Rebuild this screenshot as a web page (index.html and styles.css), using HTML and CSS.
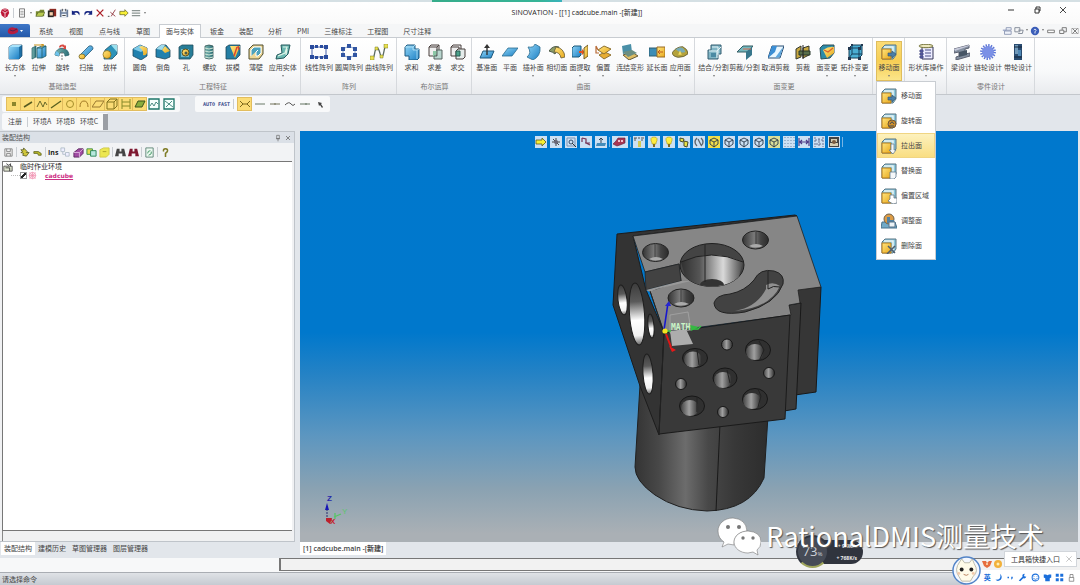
FILE: index.html
```html
<!DOCTYPE html>
<html lang="zh-CN">
<head>
<meta charset="utf-8">
<title>SINOVATION</title>
<link rel="stylesheet" href="styles.css">
</head>
<body>
<svg class="sprite" aria-hidden="true">
  <defs>
    <linearGradient id="blue" x1="0" y1="0" x2="1" y2="1"><stop offset="0" stop-color="#8fd4f5"/><stop offset="1" stop-color="#1c7fc4"/></linearGradient>
    <linearGradient id="teal" x1="0" y1="0" x2="1" y2="0"><stop offset="0" stop-color="#7fb9b4"/><stop offset="1" stop-color="#2c6f78"/></linearGradient>
    <linearGradient id="gold" x1="0" y1="0" x2="1" y2="1"><stop offset="0" stop-color="#ffe680"/><stop offset="1" stop-color="#e8a81c"/></linearGradient>
  </defs>
  <symbol id="box" viewBox="0 0 16 16"><path d="M2 3l3-2h10v11l-3 3H2z" fill="#1d6fa5" stroke="#17486b" stroke-width=".7"/><path d="M2 3h10v12H2z" fill="url(#blue)"/><path d="M2 3l3-2h10l-3 2z" fill="#a7e2fa"/></symbol>
  <symbol id="extrude" viewBox="0 0 16 16"><path d="M1 4l4-2v11l-4 2z" fill="url(#teal)" stroke="#215a5f" stroke-width=".7"/><path d="M6 4l5-2h4v10l-4 2H6z" fill="url(#blue)" stroke="#215a5f" stroke-width=".8"/><path d="M6 4h5v10M11 4l4-2" fill="none" stroke="#215a5f" stroke-width=".8"/><path d="M3 1h9M10 0l3 1-3 2" stroke="#c9931d" fill="none"/></symbol>
  <symbol id="revolve" viewBox="0 0 16 16"><path d="M1 11C2 2 14 2 15 11l-4 1c0-5-6-5-6 0z" fill="url(#teal)" stroke="#245d68" stroke-width=".8"/><path d="M1 11l4 1 0-3-3-2z" fill="#6fc4ee"/><path d="M5 3c1-3 5-3 6-1l1-1v4H8l2-1C9 2 7 2 6 4z" fill="#d94b43"/><path d="M8 8v8" stroke="#777" stroke-dasharray="2 1"/></symbol>
  <symbol id="sweep" viewBox="0 0 16 16"><path d="M2 11L11 2q4-1 4 3L6 14q-5 2-4-3z" fill="url(#blue)" stroke="#2b5d77" stroke-width=".8"/><ellipse cx="4" cy="12.500" rx="3" ry="2.500" fill="url(#gold)" stroke="#6b5a1c" stroke-width=".7"/></symbol>
  <symbol id="loft" viewBox="0 0 16 16"><path d="M3 6l6-5h6v9l-5 5H2z" fill="#2d93b9" stroke="#1f5268" stroke-width=".8"/><path d="M9 1h6v7z" fill="#9be0ee"/><circle cx="5" cy="10.500" r="4" fill="url(#gold)" stroke="#7b641d" stroke-width=".7"/></symbol>
  <symbol id="fillet" viewBox="0 0 16 16"><path d="M1 5l7-4 7 3v8l-6 4-8-4z" fill="#2181ae" stroke="#1f4a5e" stroke-width=".8"/><path d="M1 5l7-4 7 3-6 4z" fill="#7fcbe8"/><path d="M7 3l3-1 5 2v5q-1 3-4 2 1-5-4-8z" fill="url(#gold)"/></symbol>
  <symbol id="chamfer" viewBox="0 0 16 16"><path d="M1 5l5-4h5l4 5v7l-5 2-9-2z" fill="#2181ae" stroke="#1f4a5e" stroke-width=".8"/><path d="M1 5l5-4h4L7 6z" fill="#a1dbec"/><path d="M7 6l3-4 5 5-5 2z" fill="url(#gold)"/></symbol>
  <symbol id="hole" viewBox="0 0 16 16"><path d="M1 3l3-2h11v10l-3 4H1z" fill="#277d98" stroke="#224e5d" stroke-width=".8"/><path d="M3 5h8v8H3z" fill="#72bac9"/><circle cx="7.500" cy="8.500" r="3.500" fill="url(#gold)" stroke="#5a4e1a"/><circle cx="8" cy="9" r="1.500" fill="#495c4b"/></symbol>
  <symbol id="thread" viewBox="0 0 16 16"><path d="M4 2q4-2 8 0v12q-4 2-8 0z" fill="url(#teal)" stroke="#355" stroke-width=".8"/><path d="M4 4q4 2 8 0M4 7q4 2 8 0M4 10q4 2 8 0M4 13q4 2 8 0" stroke="#cfe7d8" fill="none"/></symbol>
  <symbol id="draft" viewBox="0 0 16 16"><path d="M1 3l3-2h11v10l-4 4H1z" fill="#247ea4" stroke="#1d4658" stroke-width=".8"/><path d="M5 2h10L10 14z" fill="url(#gold)"/><path d="M12 3l-3 9M13 2l1 4" stroke="#db4330" stroke-width="1.400"/></symbol>
  <symbol id="shell" viewBox="0 0 16 16"><path d="M1 5l4-4h10v9l-4 5H1z" fill="#ecd795" stroke="#504e31"/><path d="M3 12V6l3-3h7v6l-3 3H8V8l2-2" fill="#4ba2bc" stroke="#fff"/></symbol>
  <symbol id="apply" viewBox="0 0 16 16"><path d="M6 1l9 0-2 9-4 4-8 1 1-4 5-2z" fill="#6db9b2" stroke="#24595c"/><path d="M8 3h4l-2 6-7 3M12 5l-1 6" fill="none" stroke="#dff4e8" stroke-width="1.200"/></symbol>
  <symbol id="linear" viewBox="0 0 18 16"><path d="M2 3h14v10H2z" fill="none" stroke="#4660a8"/><path d="M0 1h4v4H0zM5 1h3v3H5zM10 1h3v3h-3zM14 1h4v4h-4zM0 11h4v4H0zM5 12h3v3H5zM10 12h3v3h-3zM14 11h4v4h-4z" fill="#294b9d"/></symbol>
  <symbol id="circular" viewBox="0 0 18 16"><path d="M9 2l6 3v6l-6 3-6-3V5z" fill="none" stroke="#7c9acb"/><path d="M7 0h4v4H7zM7 12h4v4H7zM1 3h4v4H1zM13 3h4v4h-4zM1 9h4v4H1zM13 9h4v4h-4z" fill="#3155a2"/></symbol>
  <symbol id="curvearr" viewBox="0 0 18 16"><path d="M2 14C5 16 4 4 7 4s3 10 5 9 2-11 4-11" fill="none" stroke="#5a6a61" stroke-width="1.300"/><path d="M0 12h4v4H0zM5 3h3v3H5zM10 11h3v3h-3zM14 0h4v4h-4z" fill="#e9e04f" stroke="#777925" stroke-width=".5"/></symbol>
  <symbol id="union" viewBox="0 0 16 16"><path d="M1 3l2-2h8v4h4v9l-2 2H5v-4H1z" fill="url(#blue)" stroke="#1e5b81"/><path d="M1 3h8v3h4v9M9 3l2-2M13 6l2-1" fill="none" stroke="#bce7f7" stroke-width=".8"/></symbol>
  <symbol id="subtract" viewBox="0 0 16 16"><path d="M2 3l2-2h8v9l-2 2H2zM2 3h8v9M10 3l2-2" fill="#eee" stroke="#493f3c"/><path d="M6 7h5v3H9v3H6z" fill="#8bc7a6"/><path d="M9 6h6v9H7v-3h3V6" fill="#b9d6cf" stroke="#54625f"/></symbol>
  <symbol id="intersect" viewBox="0 0 16 16"><path d="M1 3l2-2h8v9l-2 2H1zM1 3h8v9" fill="#eee" stroke="#493f3c"/><path d="M6 7l2-2h7v8l-2 2H6z" fill="#e5eceb" stroke="#493f3c"/><path d="M6 7h4v5H6z" fill="#4ca28b" stroke="#285f54"/></symbol>
  <symbol id="datum" viewBox="0 0 16 16"><path d="M4 7h11l-3 7H1z" fill="url(#blue)" stroke="#1f587c"/><path d="M8 11V3" stroke="#333" stroke-width="1.400"/><path d="M5 4l3-4 3 4z" fill="#333"/></symbol>
  <symbol id="plane" viewBox="0 0 16 16"><path d="M6 4h10l-6 8H0z" fill="url(#blue)" stroke="#2b6c91" stroke-width=".8"/></symbol>
  <symbol id="interp" viewBox="0 0 16 16"><path d="M3 3q6 1 7-3l5 3q1 9-7 13l-6-3q5-4 1-10z" fill="url(#blue)" stroke="#2b6c91" stroke-width=".8"/></symbol>
  <symbol id="tangent" viewBox="0 0 16 16"><path d="M0 7q4-6 10-4l-4 7q-2-2-6-3z" fill="#8c9c68" stroke="#4c5a49"/><path d="M7 3q8 1 9 10l-4 1q-1-6-7-6z" fill="url(#gold)" stroke="#665932" stroke-width=".8"/></symbol>
  <symbol id="extract" viewBox="0 0 16 16"><path d="M0 4l2-2h7v9l-2 2H0z" fill="url(#blue)" stroke="#1b5879"/><path d="M7 7h3V5l3 3-3 3V9H7z" fill="#e5531f"/><path d="M12 4l4-3v11l-4 3z" fill="url(#gold)" stroke="#755f28"/></symbol>
  <symbol id="offset" viewBox="0 0 16 16"><path d="M4 11l6-3 6 3-7 4z" fill="#e8ad32" stroke="#8d7132"/><path d="M3 6l6-4 7 3-7 5z" fill="url(#gold)" stroke="#8d7132"/><path d="M1 2l2 4M1 2v7h3" fill="none" stroke="#b76b37" stroke-width="1.200"/></symbol>
  <symbol id="morph" viewBox="0 0 16 16"><path d="M0 2l9-2 1 8-9 2z" fill="#498fa7"/><path d="M1 11l9-3 6 4-9 4z" fill="#dfbd63" stroke="#665a38"/><path d="M1 8l9-2 5 3-9 4z" fill="#6c8f82"/></symbol>
  <symbol id="extend" viewBox="0 0 16 16"><path d="M0 4h9v8H0z" fill="#3d8db5" stroke="#2e5f72"/><path d="M8 3h8v10H8z" fill="url(#gold)" stroke="#986a25"/><path d="M10 8h4M11 6l-2 2 2 2" fill="none" stroke="#c15a1b"/></symbol>
  <symbol id="appface" viewBox="0 0 18 16"><path d="M0 9q5-7 12-7 6 3 6 8-4 4-11 4-6-1-7-5z" fill="#b4a23b" stroke="#625d31"/><path d="M4 5q8-5 11 3-6 2-11-3z" fill="#77abb7"/><path d="M7 11l2-5 2 5z" fill="#f5dd61"/></symbol>
  <symbol id="joinsplit" viewBox="0 0 16 16"><path d="M5 1h10v9h-3v5H2V6h3z" fill="#80b5c5" stroke="#335c70"/><path d="M3 7h8v7M11 7l4-4M6 3h6v8" stroke="#e6f4f7" fill="none"/><path d="M5 9h5v4H5z" fill="#4b8aa3"/></symbol>
  <symbol id="cutsplit" viewBox="0 0 16 16"><path d="M0 8l6-6h10l-5 6z" fill="#73b6bc" stroke="#335c64"/><path d="M9 8l6-5v8l-6 5z" fill="#37768b"/><path d="M6 5h8" stroke="#dc6e52"/></symbol>
  <symbol id="uncut" viewBox="0 0 16 16"><path d="M4 2h12l-4 12H0z" fill="#e9f7ff" stroke="#294f74"/><path d="M4 2h5l-2 6-7 6z" fill="#3b8ed4"/><path d="M15 3l-3 10-5 1z" fill="#5ca6de"/></symbol>
  <symbol id="cut" viewBox="0 0 16 16"><path d="M1 5l5-3v11l-5 2zM8 4l6-2v9l-6 3z" fill="#c7a740" stroke="#32372c"/><path d="M4 7h11v4H4z" fill="#586e4b" stroke="#29382b"/><path d="M8 1v14" stroke="#222"/></symbol>
  <symbol id="facechg" viewBox="0 0 16 16"><path d="M1 4l3-3h11v8l-4 5-9 1z" fill="#2c8ba8" stroke="#2e5058"/><path d="M4 6q6-4 11-3v6l-7 5z" fill="url(#gold)"/><path d="M5 6l4 2 5-4" fill="none" stroke="#d9622c" stroke-width="1.200"/></symbol>
  <symbol id="topo" viewBox="0 0 16 16"><path d="M2 4l3-3h10v10l-3 3H2z" fill="#4baed3" stroke="#153e57"/><path d="M2 4h10v10M12 4l3-3M5 1v9h10M5 10l-3 4" fill="none" stroke="#173f5a"/><path d="M1 3h3v3H1zM11 3h3v3h-3zM1 13h3v3H1zM11 13h3v3h-3zM4 0h2v2H4zM14 0h2v2h-2z" fill="#233850"/></symbol>
  <symbol id="library" viewBox="0 0 16 16"><path d="M4 3h11v12H4z" fill="#ececff" stroke="#343457"/><ellipse cx="8" cy="2" rx="7" ry="1.700" fill="#eee9bf" stroke="#77763f"/><path d="M2 6h3v2H2zM2 9h3v2H2zM2 12h3v2H2zM7 6h6M7 9h6M7 12h6" fill="#575bb0" stroke="#4a4e87"/></symbol>
  <symbol id="beam" viewBox="0 0 16 16"><path d="M0 5l15-4v3l-4 1v5l5-1v3L2 16v-3l3-1V8L0 9z" fill="#8490a0" stroke="#5d6171"/><path d="M5 8l8-2v5l-8 2z" fill="#475565"/><path d="M0 5l15-4v1L1 7z" fill="#c6c9da"/></symbol>
  <symbol id="gear" viewBox="0 0 16 16"><circle cx="8" cy="8" r="6" fill="#7b90e6"/><circle cx="8" cy="8" r="6.700" fill="none" stroke="#5d76d6" stroke-width="2.400" stroke-dasharray="1.400 1.230"/></symbol>
  <symbol id="pulley" viewBox="0 0 16 16"><path d="M4 0h8v16H4z" fill="#294b70"/><path d="M5 1h3v9H5z" fill="#7199b9"/><path d="M8 6h3v6H8z" fill="#5088b5"/><path d="M4 3h8M4 13h8" stroke="#14263d"/></symbol>
  <symbol id="moveface" viewBox="0 0 16 16"><path d="M1 4l3-3h11v10l-3 4H1z" fill="#8cc9de" stroke="#587483"/><path d="M1 5h9v10H1z" fill="url(#gold)" stroke="#b67a1b"/><path d="M3 3h9v9" fill="none" stroke="#eaf5f5" stroke-width="1.500"/></symbol>
  <symbol id="shift" viewBox="0 0 16 16"><use href="#moveface"/><path d="M7 9h4V7l4 3-4 4v-2H7z" fill="#4a7ea6" stroke="#2f536e" stroke-width=".6"/></symbol>
  <symbol id="rot" viewBox="0 0 16 16"><use href="#moveface"/><circle cx="11" cy="11" r="4" fill="#cf902c" stroke="#6e5638"/><path d="M9 11q2-4 4 0M8 13h5" fill="none" stroke="#3f4d5b"/></symbol>
  <symbol id="pull" viewBox="0 0 16 16"><use href="#moveface"/><path d="M10 6h3v6h2l-3 4-4-4h2z" fill="#f4f5f4" stroke="#5d7587" stroke-width=".7"/></symbol>
  <symbol id="replace" viewBox="0 0 16 16"><use href="#moveface"/><path d="M9 9h6v5l-2 2H9z" fill="#f5f8fa" stroke="#5e7991" stroke-width=".8"/></symbol>
  <symbol id="region" viewBox="0 0 16 16"><use href="#moveface"/><path d="M9 7l4 0 0 3 3 0 0 5-4 1-5-3 2-2z" fill="#fff" stroke="#667785" stroke-width=".8"/></symbol>
  <symbol id="adjust" viewBox="0 0 16 16"><path d="M1 9h13l2 6H0z" fill="#71aac7" stroke="#49728c"/><circle cx="8" cy="6" r="5" fill="#dd9c46" stroke="#6c614e"/><path d="M6 4h3v3h4v3H6z" fill="#5082a4"/><path d="M8 9h6v5H8z" fill="#edf4f7" stroke="#58758b"/></symbol>
  <symbol id="remove" viewBox="0 0 16 16"><use href="#moveface"/><path d="M7 8l7 7M14 8l-8 8" stroke="#4e5e70" stroke-width="1.500"/></symbol>
  <symbol id="cube" viewBox="0 0 12 12"><path d="M2 4l4-2 4 2v4l-4 3-4-3zM2 4l4 2 4-2M6 6v5" fill="none" stroke="#28384a" stroke-width=".9"/></symbol>
  <symbol id="bulb" viewBox="0 0 12 12"><path d="M4 7q-3-6 2-6t2 6v1H4z" fill="#ffed41" stroke="#a69719" stroke-width=".6"/><path d="M5 8h2v3H5z" fill="#816d24"/></symbol>
  <symbol id="arrow" viewBox="0 0 12 12"><path d="M1 4h6V2l4 4-4 4V8H1z" fill="#f7ef35" stroke="#5b581f" stroke-width=".8"/></symbol>
  <symbol id="binoc" viewBox="0 0 12 12"><path d="M2 2h3v3h2V2h3l2 8H8V7H4v3H0z" fill="currentColor"/></symbol>
</svg>

<div class="topline"></div>
<header class="titlebar">
  <nav class="quick" aria-label="快速访问">
    <button aria-label="应用"><svg viewBox="0 0 12 12"><path d="M2 2q4-3 8 0l1 4-2 4-3 2-4-3-1-4z" fill="#bd1737"/><path d="M3 4l3 2 3-2M6 6v5M4 1l2 2 2-2" fill="none" stroke="#fff" stroke-width=".9"/></svg></button>
    <i class="sep"></i>
    <button aria-label="新建"><svg viewBox="0 0 12 12"><path d="M3 1h6v10H3z" fill="#fff" stroke="#666"/><path d="M4 4h4M4 6h4M4 8h4" stroke="#777" stroke-width=".8"/></svg></button>
    <i class="caret"></i>
    <button aria-label="打开"><svg viewBox="0 0 12 12"><path d="M1 4h4l1-2h5v8H1z" fill="#788932"/><path d="M1 10l3-5h8l-3 5z" fill="#b8c94f" stroke="#3f4d25" stroke-width=".6"/></svg></button>
    <button aria-label="文件"><svg viewBox="0 0 12 12"><path d="M3 1h8v9H3z" fill="#8b2920"/><path d="M1 3h7v8H1z" fill="#292927"/><path d="M3 5h4v4H3z" fill="#f6cda9"/></svg></button>
    <button aria-label="保存"><svg viewBox="0 0 12 12"><path d="M1 2h10v9H1z" fill="#6a7c9b"/><path d="M3 2h6v3H3zM3 7h6v4H3z" fill="#edf1f5"/><path d="M4 1v3M8 1v3M4 9h4" stroke="#333"/></svg></button>
    <button aria-label="撤销"><svg viewBox="0 0 12 12"><path d="M1 3v5h5L4 6q4-2 6 3 2-7-7-5z" fill="#172782"/></svg></button>
    <button aria-label="重做"><svg viewBox="0 0 12 12"><path d="M11 3v5H6l2-2Q4 4 2 9 0 2 9 4z" fill="#172782"/></svg></button>
    <button aria-label="删除"><svg viewBox="0 0 12 12"><path d="M2 2l8 8M10 2l-8 8" stroke="#aa1b23" stroke-width="1.500"/></svg></button>
    <button aria-label="部分删除"><svg viewBox="0 0 12 12"><path d="M4 5l6 5M10 2L5 10" stroke="#8c2d35"/><path d="M1 10h2" stroke="#333"/></svg></button>
    <button aria-label="前进"><svg><use href="#arrow"/></svg></button>
    <button aria-label="列表"><svg viewBox="0 0 12 12"><path d="M1 3h10M1 6h10M1 9h10" stroke="#8c9592" stroke-width="1.500"/></svg></button>
    <i class="caret"></i>
  </nav>
  <h1>SINOVATION - [[1] cadcube.main -[新建]]</h1>
  <div class="winctl">
    <button aria-label="最小化"><svg viewBox="0 0 12 12"><path d="M3 6h6" stroke="#333"/></svg></button>
    <button aria-label="还原"><svg viewBox="0 0 12 12"><path d="M4 5h4v4H4zM5 5V3h4v4H8" fill="none" stroke="#333"/></svg></button>
    <button aria-label="关闭"><svg viewBox="0 0 12 12"><path d="M3 3l6 6M9 3L3 9" stroke="#333" stroke-width=".9"/></svg></button>
  </div>
</header>

<nav class="tabs">
  <button class="appbtn" aria-label="菜单"><svg viewBox="0 0 18 12"><path d="M1 5q2-4 7-2 4 0 3 4-4 3-8 2-3-1-2-4z" fill="#b51e41"/><path d="M3 5l3 1 4-2" stroke="#4a2454" fill="none"/><path d="M13 5h3l-1.500 2z" fill="#fff"/></svg></button>
  <button class="tab">系统</button><button class="tab">视图</button><button class="tab">点与线</button><button class="tab">草图</button><button class="tab on">面与实体</button><button class="tab">钣金</button><button class="tab">装配</button><button class="tab">分析</button><button class="tab">PMI</button><button class="tab">三维标注</button><button class="tab">工程图</button><button class="tab">尺寸注释</button>
  <div class="mdi">
    <button aria-label="布局"><svg viewBox="0 0 12 12"><path d="M5 2h6v3H5zM3 6h8v4H3z" fill="#eef2fa" stroke="#8592ae"/><path d="M1 5h4" stroke="#6679a9"/></svg></button>
    <button aria-label="窗口"><svg viewBox="0 0 12 12"><path d="M1 2h6v5H1zM5 5h6M5 9h5l1-4" fill="none" stroke="#737d8c"/></svg></button>
    <i class="caret"></i>
    <button aria-label="帮助"><svg viewBox="0 0 12 12"><circle cx="6" cy="6" r="5" fill="#3a5db8"/><path d="M4.500 5q1.500-3 3 0L6 7v2" fill="none" stroke="#fff"/></svg></button>
    <i class="caret"></i>
    <button aria-label="最小化文档"><svg viewBox="0 0 12 12"><path d="M2 5h8v3H2z" fill="#fff" stroke="#666"/></svg></button>
    <button aria-label="还原文档"><svg viewBox="0 0 12 12"><path d="M2 5h5v4H2zM5 5V2h5v5H7" fill="none" stroke="#666"/></svg></button>
    <button aria-label="关闭文档"><svg viewBox="0 0 12 12"><path d="M2 3h8v6H2z" fill="none" stroke="#999" stroke-width=".7"/><path d="M3 3l6 6M9 3L3 9" stroke="#666"/></svg></button>
  </div>
</nav>

<main class="ribbon">
  <section class="group g-base"><div class="tools">
    <button class="more"><svg><use href="#box"/></svg>长方体</button><button><svg><use href="#extrude"/></svg>拉伸</button><button><svg><use href="#revolve"/></svg>旋转</button><button><svg><use href="#sweep"/></svg>扫描</button><button><svg><use href="#loft"/></svg>放样</button>
  </div><h2>基础造型</h2></section>
  <section class="group g-feat"><div class="tools">
    <button><svg><use href="#fillet"/></svg>圆角</button><button><svg><use href="#chamfer"/></svg>倒角</button><button><svg><use href="#hole"/></svg>孔</button><button><svg><use href="#thread"/></svg>螺纹</button><button><svg><use href="#draft"/></svg>拔模</button><button><svg><use href="#shell"/></svg>薄壁</button><button class="wide more"><svg><use href="#apply"/></svg>应用实体</button>
  </div><h2>工程特征</h2></section>
  <section class="group g-array"><div class="tools">
    <button class="wide"><svg><use href="#linear"/></svg>线性阵列</button><button class="wide"><svg><use href="#circular"/></svg>圆周阵列</button><button class="wide"><svg><use href="#curvearr"/></svg>曲线阵列</button>
  </div><h2>阵列</h2></section>
  <section class="group g-bool"><div class="tools">
    <button><svg><use href="#union"/></svg>求和</button><button><svg><use href="#subtract"/></svg>求差</button><button><svg><use href="#intersect"/></svg>求交</button>
  </div><h2>布尔运算</h2></section>
  <section class="group g-surf"><div class="tools">
    <button><svg><use href="#datum"/></svg>基准面</button><button><svg><use href="#plane"/></svg>平面</button><button class="more"><svg><use href="#interp"/></svg>插补面</button><button><svg><use href="#tangent"/></svg>相切面</button><button class="more"><svg><use href="#extract"/></svg>面提取</button><button class="more"><svg><use href="#offset"/></svg>偏置</button><button class="wide"><svg><use href="#morph"/></svg>连结变形</button><button><svg><use href="#extend"/></svg>延长面</button><button class="more"><svg><use href="#appface"/></svg>应用面</button>
  </div><h2>曲面</h2></section>
  <section class="group g-change"><div class="tools">
    <button class="wide more"><svg><use href="#joinsplit"/></svg>结合/分割</button><button class="wide"><svg><use href="#cutsplit"/></svg>剪裁/分割</button><button class="wide"><svg><use href="#uncut"/></svg>取消剪裁</button><button><svg><use href="#cut"/></svg>剪裁</button><button class="more"><svg><use href="#facechg"/></svg>面变更</button><button class="wide more"><svg><use href="#topo"/></svg>拓扑变更</button>
  </div><h2>面变更</h2></section>
  <section class="group g-move"><div class="tools">
    <button class="more pressed" aria-expanded="true"><svg><use href="#shift"/></svg>移动面</button>
    </div>
    <div class="menu" role="menu">
      <button role="menuitem"><svg><use href="#shift"/></svg>移动面</button>
      <button role="menuitem"><svg><use href="#rot"/></svg>旋转面</button>
      <button role="menuitem" class="hot"><svg><use href="#pull"/></svg>拉出面</button>
      <button role="menuitem"><svg><use href="#replace"/></svg>替换面</button>
      <button role="menuitem"><svg><use href="#region"/></svg>偏置区域</button>
      <button role="menuitem"><svg><use href="#adjust"/></svg>调整面</button>
      <button role="menuitem"><svg><use href="#remove"/></svg>删除面</button>
    </div>
  </section>
  <section class="group g-lib"><div class="tools"><button class="wide more"><svg><use href="#library"/></svg>形状库操作</button></div></section>
  <section class="group g-part"><div class="tools">
    <button><svg><use href="#beam"/></svg>梁设计</button><button class="wide"><svg><use href="#gear"/></svg>链轮设计</button><button class="wide"><svg><use href="#pulley"/></svg>带轮设计</button>
  </div><h2>零件设计</h2></section>
</main>

<div class="bars">
  <div class="bar">
    <div class="strip snap">
      <button aria-label="点"><svg viewBox="0 0 12 12"><path d="M4 4h4v4H4z" fill="#8c862c"/></svg></button>
      <button aria-label="端点"><svg viewBox="0 0 12 12"><path d="M2 9l8-5" stroke="#565b20" stroke-width="1.500"/></svg></button>
      <button aria-label="样条"><svg viewBox="0 0 12 12"><path d="M1 9l3-6 3 6 2-5 2 3" fill="none" stroke="#68682a"/></svg></button>
      <button aria-label="直线"><svg viewBox="0 0 12 12"><path d="M1 10L11 3" stroke="#58601e" stroke-width="1.300"/></svg></button>
      <button aria-label="圆"><svg viewBox="0 0 12 12"><circle cx="6" cy="6" r="3.500" fill="none" stroke="#a58e2a"/></svg></button>
      <button aria-label="圆弧"><svg viewBox="0 0 12 12"><path d="M2 9q0-6 4-6t4 6" fill="none" stroke="#a27a25"/></svg></button>
      <button aria-label="平面"><svg viewBox="0 0 12 12"><path d="M4 3h8L8 9H0z" fill="none" stroke="#9a7930"/></svg></button>
      <button aria-label="实体"><svg viewBox="0 0 12 12"><path d="M1 4l3-3h7v7l-3 3H1zM1 4h7v7M8 4l3-3" fill="none" stroke="#82721f"/></svg></button>
      <button aria-label="尺寸"><svg viewBox="0 0 12 12"><path d="M2 1v10M10 1v10M2 4h8M2 8h8" fill="none" stroke="#888a2a"/></svg></button>
      <button aria-label="面"><svg viewBox="0 0 12 12"><path d="M4 3h7L8 9H1z" fill="#8bad3d" stroke="#3e551b"/></svg></button>
      <button class="plain" aria-label="图形一"><svg viewBox="0 0 12 12"><path d="M1 1h10v10H1z" fill="#f4fffc" stroke="#1c7668" stroke-width="1.300"/><path d="M2 8l2-3 2 3 2-4 2 2" fill="none" stroke="#4c8c83"/></svg></button>
      <button class="plain" aria-label="图形二"><svg viewBox="0 0 12 12"><path d="M1 1h10v10H1z" fill="#f4fffc" stroke="#1c7668" stroke-width="1.300"/><path d="M2 3l8 6M3 9l6-6" stroke="#4c8c83"/></svg></button>
    </div>
    <div class="strip auto">
      <span class="mono">AUTO FAST</span><i class="sep"></i>
      <button aria-label="自动"><svg viewBox="0 0 12 12"><path d="M1 3l3 3-3 3M11 3L8 6l3 3M3 6h6" fill="none" stroke="#7c661b"/></svg></button>
      <button class="plain" aria-label="线段"><svg viewBox="0 0 12 12"><path d="M1 6h10" stroke="#6a7a68"/></svg></button>
      <button class="plain" aria-label="中点"><svg viewBox="0 0 12 12"><path d="M1 6h10M6 5v2" stroke="#73735b"/></svg></button>
      <button class="plain" aria-label="曲线"><svg viewBox="0 0 12 12"><path d="M1 7q4-4 6-1t4 0" fill="none" stroke="#555"/></svg></button>
      <button class="plain" aria-label="切线"><svg viewBox="0 0 12 12"><path d="M1 6h10M7 5v2" stroke="#647562"/></svg></button>
      <button class="plain" aria-label="选择"><svg viewBox="0 0 12 12"><path d="M4 4l4 1-1 1 2 3-1 1-2-3-1 1z" fill="#444"/></svg></button>
    </div>
  </div>
  <div class="bar">
    <div class="strip env"><button>注册</button><i class="sep"></i><button>环境A</button><button>环境B</button><button>环境C</button><i class="grip"></i></div>
  </div>
</div>

<div class="work">
  <aside class="side">
    <div class="panel">
      <div class="phead"><span>装配结构</span><button aria-label="固定"><svg viewBox="0 0 12 12"><path d="M4 2h4v5H4zM3 7h6M6 7v4" fill="none" stroke="#666"/></svg></button><button aria-label="关闭面板"><svg viewBox="0 0 12 12"><path d="M3 3l6 6M9 3L3 9" stroke="#555"/></svg></button></div>
      <div class="ptools">
        <button aria-label="保存装配"><svg viewBox="0 0 12 12"><path d="M2 2h8v8H2zM4 2v3h4V2M4 10V7h4v3" fill="#eee" stroke="#888"/></svg></button><i class="sep"></i>
        <button aria-label="添加"><svg viewBox="0 0 12 12"><path d="M2 3h3V1l4 4-1 1h3L8 10 4 9l1-2-3-1 2-1z" fill="#d0c73b" stroke="#484c1a" stroke-width=".8"/></svg></button>
        <button aria-label="移出"><svg viewBox="0 0 12 12"><path d="M2 5h5l3 2v2H7L6 7H2z" fill="#b8b82b" stroke="#555b17" stroke-width=".8"/></svg></button><i class="sep"></i>
        <button class="ins">Ins</button>
        <button aria-label="树"><svg viewBox="0 0 12 12"><path d="M1 1h4v4H1zM6 6h4v4H6zM3 5v3h3" fill="#eef" stroke="#b2bec9"/></svg></button>
        <button aria-label="部件"><svg viewBox="0 0 12 12"><path d="M1 6l5-4h5v5l-4 4H1z" fill="#a14ca4" stroke="#5b285f"/><path d="M1 6h6v5M7 6l4-4" stroke="#ddb3dd" fill="none"/></svg></button>
        <button aria-label="复制"><svg viewBox="0 0 12 12"><path d="M1 2h6v6H1z" fill="#e5de51" stroke="#398f44"/><path d="M5 4h6v6H5z" fill="#b8e8df" stroke="#258355"/></svg></button>
        <button aria-label="显示"><svg viewBox="0 0 12 12"><path d="M1 3l4-2h6v7l-3 3H1z" fill="#ece750" stroke="#cfc848"/><path d="M4 5h4" stroke="#aaa128"/></svg></button><i class="sep"></i>
        <button aria-label="查找"><svg><use href="#binoc"/></svg></button>
        <button aria-label="查找下一个" class="red"><svg><use href="#binoc"/></svg></button><i class="sep"></i>
        <button aria-label="更新"><svg viewBox="0 0 12 12"><path d="M2 1h8v10H2z" fill="#edfaf1" stroke="#5f8377"/><path d="M4 7q0-3 3-3M8 5q1 3-3 4" fill="none" stroke="#38905d"/></svg></button><i class="sep"></i>
        <button aria-label="帮助说明"><svg viewBox="0 0 12 12"><path d="M4 5q-1-3 2-3t2 3L6 7v4" fill="none" stroke="#807d28" stroke-width="1.700"/></svg></button>
      </div>
      <div class="tree">
        <div class="root"><svg viewBox="0 0 12 12"><path d="M1 5h10v6H1z" fill="#dfe5cf" stroke="#444"/><path d="M3 7h5v4M4 2l3 2 2-2v3" fill="none" stroke="#333"/></svg><span>临时作业环境</span></div>
        <label class="leaf"><i class="twig"></i><input type="checkbox" checked><svg viewBox="0 0 12 12"><path d="M2 2l8 8M10 2l-8 8M6 1v10M1 6h10" stroke="#ef8eae"/><circle cx="6" cy="6" r="4" fill="none" stroke="#f4a6c0" stroke-width="1.500"/></svg><span>cadcube</span></label>
      </div>
      <div class="hscroll"></div>
    </div>
    <nav class="btabs"><button class="on">装配结构</button><button>建模历史</button><button>草图管理器</button><button>图层管理器</button></nav>
  </aside>

  <section class="viewer">
    <div class="canvas">
      <div class="vtools">
        <button aria-label="前进视图"><svg><use href="#arrow"/></svg></button>
        <button aria-label="平移"><svg viewBox="0 0 12 12"><path d="M6 2v8M2 6h8M3 3l6 6" stroke="#444"/><circle cx="6" cy="6" r="2" fill="#667"/></svg></button>
        <button aria-label="窗口缩放"><svg viewBox="0 0 12 12"><path d="M2 2h8v8H2z" fill="none" stroke="#7c97b8"/><circle cx="6" cy="6" r="2" fill="none" stroke="#344e6d"/><path d="M7 7l4 4" stroke="#333"/></svg></button>
        <button aria-label="旋转视图"><svg viewBox="0 0 12 12"><path d="M2 2l4 1v4l4 2M2 6V2M5 7h5" fill="none" stroke="#753355" stroke-width="1.200"/></svg></button>
        <button aria-label="正视"><svg viewBox="0 0 12 12"><path d="M2 7h9l-1 3H1z" fill="#438cbb"/><path d="M6 7V2M4 4l2-2 2 2" fill="none" stroke="#345"/></svg></button>
        <i class="sep"></i>
        <button class="long" aria-label="显示模式"><svg viewBox="0 0 16 12"><path d="M1 8l3-3 2-3h7v5l-5 2-3 1z" fill="#a83552" stroke="#5f1c3b" stroke-width=".6"/><path d="M6 5h2M9 5h2" stroke="#f0c0cc" stroke-width="2"/></svg></button>
        <i class="sep"></i>
        <button aria-label="类型灯"><svg viewBox="0 0 12 12"><path d="M1 2h3M2 2v3M5 2h2M8 2h3M8 4h2" stroke="#555"/><path d="M5 5h3v6H5z" fill="#d2c957"/></svg></button>
        <button aria-label="显示"><svg><use href="#bulb"/></svg></button>
        <button aria-label="隐藏"><svg><use href="#bulb"/></svg></button>
        <button aria-label="反转"><svg viewBox="0 0 12 12"><path d="M2 2l4 1-1 3-3-1zM6 5l4 1-1 5-3-1z" fill="#e9e24a" stroke="#4b4d28"/></svg></button>
        <button aria-label="切换"><svg viewBox="0 0 12 12"><path d="M4 2q-4 4 0 8M8 2q4 4 0 8M5 3l3 6" fill="none" stroke="#5e656c" stroke-width="1.300"/></svg></button>
        <button class="shade" aria-label="着色"><svg><use href="#cube"/></svg></button>
        <button aria-label="线框"><svg><use href="#cube"/></svg></button>
        <button aria-label="隐藏线"><svg><use href="#cube"/></svg></button>
        <button aria-label="虚线"><svg><use href="#cube"/></svg></button>
        <button class="half" aria-label="着色线框"><svg><use href="#cube"/></svg></button>
        <button aria-label="网格"><svg viewBox="0 0 12 12"><path d="M2 1v10M5 1v10M8 1v10M11 1v10" stroke="#6a87a8" stroke-dasharray="1 2"/></svg></button>
        <button aria-label="测距"><svg viewBox="0 0 12 12"><path d="M1 2v8M11 2v8M2 6h8M4 4L2 6l2 2M8 4l2 2-2 2" fill="none" stroke="#4d3a86" stroke-width="1.200"/></svg></button>
        <button aria-label="测量"><svg viewBox="0 0 12 12"><path d="M2 1v10M10 1v10M2 4h8M3 8h6M6 2v8" stroke="#6b7393" stroke-dasharray="2 1"/></svg></button>
        <button aria-label="相机"><svg viewBox="0 0 12 12"><path d="M1 1h10v10H1z" fill="#444"/><path d="M3 3h6v3H3zM2 7h8v3H2z" fill="#d7cfb4"/><circle cx="6" cy="6" r="2" fill="#7a5c40"/></svg></button>
        <i class="sep"></i>
      </div>

      <svg class="model" viewBox="605 205 225 315" role="img" aria-label="cadcube 模型">
        <defs>
          <linearGradient id="cyl" x1="0" x2="1" y1="0" y2="0"><stop offset="0" stop-color="#343434"/><stop offset=".18" stop-color="#484848"/><stop offset=".38" stop-color="#6c6c6c"/><stop offset=".55" stop-color="#484848"/><stop offset=".75" stop-color="#383838"/><stop offset="1" stop-color="#2d2d2d"/></linearGradient>
          <linearGradient id="bore" x1="0" x2="1"><stop offset="0" stop-color="#303030"/><stop offset=".3" stop-color="#555"/><stop offset=".68" stop-color="#d9d9d9"/><stop offset="1" stop-color="#474747"/></linearGradient>
          <linearGradient id="pin" x1="0" x2="1"><stop offset="0" stop-color="#444"/><stop offset=".45" stop-color="#a0a0a0"/><stop offset=".75" stop-color="#606060"/><stop offset="1" stop-color="#292929"/></linearGradient>
          <linearGradient id="well" x1="0" x2="1"><stop offset="0" stop-color="#333"/><stop offset=".45" stop-color="#7a7a7a"/><stop offset=".7" stop-color="#444"/><stop offset="1" stop-color="#2b2b2b"/></linearGradient>
          <linearGradient id="side" x1="0" x2="0" y1="0" y2="1"><stop offset="0" stop-color="#3c3c3c"/><stop offset=".3" stop-color="#5a5a5a"/><stop offset=".6" stop-color="#fff"/><stop offset=".85" stop-color="#f2f2f2"/><stop offset="1" stop-color="#666"/></linearGradient>
          <clipPath id="bigclip"><ellipse cx="712" cy="265" rx="32" ry="21.500"/></clipPath>
        </defs>
        <path d="M640 385l-5 82q0 14 20 28 22 15 52 16 43-1 57-33l4-62z" fill="url(#cyl)" stroke="#202020"/>
        <path d="M720 424l-4 87" stroke="#191919"/>
        <path d="M797 289l24-2-5 105-21 3z" fill="#363636" stroke="#181818"/>
        <path d="M789 305l12-2-5 106-12 2z" fill="#3b3b3b" stroke="#181818"/>
        <path d="M617 234l178-19 2 1-164 20 13 54 18 42-5 103-19-49-27-81z" fill="#333" stroke="#1c1c1c"/>
        <path d="M633 236l164-20 24 71-23 3 2 13-11 2 2 10-127 17-14-41 31-10-2-17-34 8z" fill="#868686" stroke="#222" stroke-width=".8"/>
        <path d="M645 272l34-8 2 17-35 9z" fill="#424242" stroke="#252525" stroke-width=".8"/>
        <path d="M646 290l35-9 10 0-34 8-7 3z" fill="#999"/>
        <path d="M664 333l126-18-5 104-126 15z" fill="#393939" stroke="#1b1b1b"/>
        <path d="M650 291l14 42-5 101" fill="none" stroke="#222"/>
        <ellipse cx="712" cy="265" rx="32" ry="21.500" fill="#444" stroke="#202020"/>
        <g clip-path="url(#bigclip)"><path d="M681 262q30-14 62 0l-7 25h-48z" fill="url(#bore)"/><ellipse cx="712" cy="285" rx="12" ry="6" fill="#333"/><path d="M681 262q30-14 62 0M705 244v38" fill="none" stroke="#222"/></g>
        <g fill="url(#well)" stroke="#222"><ellipse cx="655.500" cy="252.500" rx="13" ry="9"/><ellipse cx="755.500" cy="240" rx="13" ry="9"/><ellipse cx="681" cy="298" rx="13" ry="9"/></g>
        <path d="M649 259q7-4 14 0-7 3-14 0M749 246q7-4 14 0-7 3-14 0M674 304q7-4 15 0-8 3-15 0" fill="#aaa"/>
        <path d="M655 244v13M756 232v12M681 290v12" stroke="#333" stroke-width=".8"/>
        <path d="M714 303q2-8 16-9 15-3 24-14 6-12 20-9 11 3 9 13-7 20-38 28-30 5-31-9z" fill="#424242" stroke="#222"/>
        <path d="M735 311q22-4 31-22l0-4q7-4 14 1-10 22-45 25z" fill="#909090"/><path d="M768 271v18q5-4 12-2" fill="none" stroke="#222"/>
        <g fill="url(#side)" stroke="#1e1e1e"><ellipse cx="622.500" cy="300" rx="4.500" ry="15" transform="rotate(-7 622 300)"/><ellipse cx="637" cy="314" rx="7.500" ry="31" transform="rotate(-4 637 314)"/><ellipse cx="651" cy="326" rx="3" ry="12" transform="rotate(-5 651 326)"/><ellipse cx="648" cy="374" rx="5" ry="20" transform="rotate(-4 648 374)"/></g>
        <g fill="#303030" stroke="#171717"><ellipse cx="695" cy="358" rx="12.500" ry="9.500"/><ellipse cx="758" cy="350" rx="12.500" ry="10.500"/><ellipse cx="725" cy="378" rx="12" ry="10"/><ellipse cx="692" cy="406" rx="12.500" ry="10"/><ellipse cx="755" cy="399" rx="12.500" ry="10.500"/></g>
        <g fill="url(#pin)"><ellipse cx="693" cy="359.500" rx="9" ry="8"/><ellipse cx="755" cy="352" rx="9" ry="8"/><ellipse cx="723" cy="380" rx="9" ry="8"/><ellipse cx="690" cy="408" rx="9" ry="8"/><ellipse cx="752" cy="401" rx="9" ry="8"/></g>
        <g fill="url(#pin)" stroke="#181818"><circle cx="727" cy="344.500" r="5.500"/><circle cx="769" cy="373" r="5.500"/><circle cx="681" cy="384" r="5.500"/><circle cx="723" cy="412" r="5.500"/></g>
        <path d="M697 350l2 15M759 341l5 9-4 9M727 370l3 13M697 397v15M758 389l3 7-3 11" fill="none" stroke="#222"/>
        <path d="M670 315l18-3 3 18-21 3z" fill="none" stroke="#aaa" stroke-width=".7"/>
        <path d="M670 331l16-2 7 15-21 2z" fill="#adadad"/>
        <path d="M664 330l4-27" stroke="#1616ce" stroke-width="1.600"/><path d="M665 306l4-5 2 5z" fill="#2626d0"/>
        <path d="M666 331h5M692 329h6l3-3" fill="none" stroke="#38c846" stroke-width="1.300"/><path d="M690 325l9 2-8 4z" fill="#35b843"/>
        <path d="M666 334l5 13" stroke="#df1616" stroke-width="2"/><path d="M669 346l7 4-4 2z" fill="#e91818"/>
        <circle cx="665" cy="331" r="2.600" fill="#f5e41d"/>
        <text x="671" y="330" class="math">MATH</text>
      </svg>

      <svg class="axes" viewBox="0 0 32 36" aria-label="坐标轴"><path d="M7 26V12" stroke="#282b70" stroke-dasharray="2 1"/><path d="M7 9l2 7H5z" fill="#1616b5"/><path d="M14 23l7-3M15 19v6" stroke="#55c665" stroke-width="1.300"/><path d="M6 24h6l-2 6-4-3z" fill="#bd202c"/><text x="7" y="7" class="az">Z</text><text x="22" y="20" class="ay">Y</text><text x="10" y="30" class="ax">X</text></svg>
    </div>
    <nav class="docs"><button>[1] cadcube.main -[新建]</button></nav>
  </section>
</div>

<div class="command"><input type="text" aria-label="命令输入"></div>
<footer class="status"><span>请选择命令</span></footer>

<div class="meter"><div class="rates"><span>+ 9.9K/s</span><span>+ 768K/s</span></div><div class="dial">73<small>%</small></div></div>
<div class="mark"><svg viewBox="0 0 44 40"><path d="M16 2C7 2 1 8 1 15q0 7 6 11l-2 5 6-3 6 1q-1-12 13-14Q29 3 16 2z" fill="#fff" stroke="#777" stroke-width=".6"/><path d="M31 15c-8 0-14 5-14 11s6 11 14 11l5-1 5 3-1-5q4-3 4-8 0-10-13-11z" fill="#fff" stroke="#777" stroke-width=".6"/><g fill="#777"><circle cx="11" cy="11" r="2"/><circle cx="22" cy="11" r="2"/><circle cx="26" cy="22" r="1.700"/><circle cx="36" cy="22" r="1.700"/></g></svg><span>RationalDMIS测量技术</span></div>

<div class="ime">
  <div class="tip"><span>工具箱快捷入口</span><button aria-label="关闭提示"><svg viewBox="0 0 12 12"><path d="M2 2l8 8M10 2l-8 8" stroke="#aaa"/></svg></button></div>
  <svg class="badge" viewBox="0 0 24 10"><path d="M1 2l4 0 1 2 2-2 3 0-2 5-3 2-3-2z" fill="#e66d3e"/><circle cx="6" cy="5" r="1" fill="#ffe6b8"/><circle cx="17" cy="5" r="4" fill="#f2b13b"/><circle cx="17" cy="5" r="1.500" fill="#fff0b4"/></svg>
  <div class="imebar">
    <button>英</button>
    <button aria-label="月亮"><svg viewBox="0 0 12 12"><path d="M8 1q3 8-6 8 3 3 7 0 3-4-1-8z" fill="#1b6fdb"/></svg></button>
    <button aria-label="标点"><svg viewBox="0 0 12 12"><path d="M2 5h2v2H2zM7 5h2v2L7 9z" fill="#1b6fdb"/></svg></button>
    <button aria-label="工具"><svg viewBox="0 0 12 12"><path d="M1 10l5-5q-1-4 3-4L8 4l2 1 1-1q0 4-4 3l-4 4z" fill="#1b6fdb"/></svg></button>
    <button aria-label="表情"><svg viewBox="0 0 12 12"><circle cx="6" cy="6" r="4.500" fill="none" stroke="#1b6fdb" stroke-width="1.400"/><path d="M4 4v1M8 4v1M3 7q3 3 6 0" fill="none" stroke="#1b6fdb"/></svg></button>
    <button aria-label="皮肤"><svg viewBox="0 0 12 12"><path d="M1 2h3l2 1 2-1h3v4l-2 1v4H3V7L1 6z" fill="#1b6fdb"/></svg></button>
    <button aria-label="工具箱"><svg viewBox="0 0 12 12"><path d="M1 1h4v4H1zM7 1h4v4H7zM1 7h4v4H1zM7 7h4v4H7z" fill="#1b6fdb"/></svg></button>
    <button aria-label="锁定"><svg viewBox="0 0 12 12"><path d="M3 6h6v5H3zM4 6V2h4v4" fill="none" stroke="#777"/></svg></button>
  </div>
  <svg class="pet" viewBox="0 0 30 30"><circle cx="15" cy="15" r="14" fill="#f4f8ff" stroke="#5183c7" stroke-width="1.500"/><path d="M8 6l2-3 3 4 5 0 3-4 2 5q5 8-1 13l-3 5H10l-3-5Q2 14 8 6z" fill="#fffbe9" stroke="#aaa995" stroke-width=".8"/><circle cx="10" cy="14" r="2" fill="#222"/><circle cx="20" cy="14" r="2" fill="#222"/><path d="M12 19q3 2 5 0" fill="none" stroke="#b9815e"/><circle cx="7" cy="18" r="1.500" fill="#f2c8aa"/><circle cx="22" cy="18" r="1.500" fill="#f2c8aa"/></svg>
</div>
</body>
</html>
```
FILE: styles.css
```css
* { box-sizing: border-box; }
body { margin: 0; min-height: 100vh; display: flex; flex-direction: column; position: relative; overflow: hidden; background: #e2e6eb; color: #444; font: 7px/9px "Noto Sans CJK SC", sans-serif; }
button { font: inherit; color: inherit; background: none; border: 0; padding: 0; margin: 0; white-space: nowrap; }
svg { display: block; flex: none; }
h1, h2 { margin: 0; font-weight: 400; }
.sprite { position: absolute; width: 0; height: 0; }
.sep { width: 1px; height: 10px; background: #c9cdd2; }
.caret { border: 1px solid transparent; border-top: 2px solid #777; }

.topline { height: 2px; background: linear-gradient(90deg, #d5e0e4 40%, #37ad8b 40%, #37b598 50%, #39b3bd 52%, #d5e0e4 52%); }
.titlebar { height: 22px; display: grid; grid-template-columns: 1fr auto 1fr; align-items: center; background: linear-gradient(#fff, #fafafa); }
.titlebar h1 { font: 7px/12px "Open Sans", "Noto Sans CJK SC", sans-serif; color: #222; padding-left: 74px; }
.quick { display: flex; align-items: center; gap: 2px; }
.quick svg { width: 10px; height: 10px; }
.quick .caret, .quick .sep { margin: 0 1px; }
.titlebar .winctl { justify-self: end; display: flex; gap: 14px; padding: 0 11px 6px 0; }
.winctl svg { width: 12px; height: 12px; }

.tabs { height: 14px; display: flex; gap: 2px; align-items: stretch; background: #f5f6f7; border-bottom: 1px solid #c8ccd1; }
.tab { padding: 0 7px; margin-bottom: -1px; }
.tab.on { padding: 0 6px; background: #fff; border: 1px solid #c8ccd1; border-bottom: 0; }
.tab:nth-last-of-type(-n+7) { padding: 0 6px 0 7px; }
.appbtn { width: 30px; background: linear-gradient(#3f77c8, #2559a9); border-radius: 0 2px 0 0; }
.appbtn svg { width: 18px; height: 12px; margin-left: 7px; }
.mdi { margin-left: auto; display: flex; align-items: center; gap: 2px; }
.mdi svg { width: 10px; height: 10px; }

.ribbon { height: 57px; display: flex; background: linear-gradient(#fff, #f8f9fa 60%, #e9ebee); border-bottom: 1px solid #c3c7cc; }
.group { flex: none; display: flex; flex-direction: column; padding: 3px 2px 2px 3px; border-right: 1px solid #d6d9dd; position: relative; }
.g-base { width: 125px; } .g-feat { width: 176px; } .g-array { width: 96px; } .g-bool { width: 75px; } .g-surf { width: 223px; }
.g-change { width: 178px; } .g-move { width: 32px; } .g-lib { width: 42px; } .g-part { width: 88px; }
.tools { display: flex; height: 40px; }
.tools button { flex: 1 0 23px; width: 23px; display: flex; flex-direction: column; align-items: center; padding-top: 3px; gap: 3px; }
.tools button.wide { flex-basis: 30px; }
.tools svg { width: 16px; height: 16px; }
.g-array .tools svg { width: 18px; }
.tools .more::after { content: ""; border: 1px solid transparent; border-top: 2px solid #777; }
.group h2 { font-size: 7px; line-height: 9px; padding-top: 1px; text-align: center; color: #777; }
.tools .pressed { background: linear-gradient(#fbdc76, #f7cf55 50%, #fbe58a); border: 1px solid #dfbd5d; padding-top: 2px; }
.menu { position: absolute; z-index: 5; left: 3px; top: 43px; width: 60px; padding: 1px 0; background: #fff; border: 1px solid #c9cdd2; }
.menu button { display: flex; align-items: center; width: 100%; height: 25px; padding-left: 4px; gap: 4px; }
.menu svg { width: 16px; height: 16px; }
.menu .hot { background: linear-gradient(#fdf2c0, #f9dd80); outline: 1px solid #f0d583; outline-offset: -1px; }

.bars { display: flex; flex-direction: column; gap: 1px; padding: 1px 0 1px 2px; }
.bar { display: flex; gap: 15px; }
.strip { display: flex; align-items: center; height: 16px; background: #f8f9fa; border-radius: 2px; }
.snap { padding: 0 4px; }
.snap button, .auto button { width: 15px; height: 14px; display: grid; place-items: center; background: #fbdc76; border: 1px solid #e2bd5e; }
.snap button { margin-right: -1px; }
.strip .plain { background: none; border-color: transparent; }
.snap .plain { width: 16px; }
.bar svg { width: 12px; height: 12px; }
.auto { padding: 0 3px 0 8px; }
.auto .sep { margin: 0 3px; }
.mono { font: 700 5px/9px "DejaVu Sans Mono", monospace; color: #3a4b8c; }
.env { padding-left: 6px; gap: 5px; height: 17px; }
.grip { width: 5px; height: 16px; background: #9b9fa5; }

.work { flex: 1; min-height: 0; display: flex; gap: 5px; padding-right: 2px; }
.side { width: 295px; flex: none; display: flex; flex-direction: column; }
.panel { flex: 1; display: flex; flex-direction: column; border: 1px solid #bfc4ca; border-left: 0; background: #f0f1f3; }
.phead { height: 11px; display: flex; align-items: center; gap: 2px; padding: 0 2px; background: #dbe0e7; color: #555; }
.phead span { flex: 1; }
.phead svg { width: 8px; height: 8px; }
.ptools { height: 18px; display: flex; align-items: center; gap: 2px; padding-left: 3px; background: #f2f3f5; }
.ptools svg { width: 11px; height: 11px; }
.ins { font: 700 7px/9px "Open Sans", sans-serif; color: #222; }
.red { color: #7d1730; }
.tree { flex: 1; margin: 0 2px; background: #fff; border: 1px solid #777; border-right: 0; }
.root, .leaf { display: flex; align-items: center; height: 9px; color: #222; }
.root span { margin-left: 7px; }
.root svg { width: 10px; height: 10px; }
.leaf span { margin-left: 8px; color: #cc2f84; font: 700 6px/9px "DejaVu Sans", sans-serif; text-decoration: underline; }
.leaf svg { width: 9px; height: 9px; }
.leaf input { width: 7px; height: 7px; margin: 0 1px 0 0; appearance: none; border: 1px solid #999; background: linear-gradient(135deg, #fff 35%, #222 36%, #222 60%, #fff 61%); }
.twig { width: 9px; margin-left: 8px; border-top: 1px dotted #bbb; }
.hscroll { height: 10px; margin: 0 2px; border-left: 1px solid #888; background: #f0f1f2; }
.btabs, .docs { height: 16px; display: flex; align-items: stretch; padding: 0 0 3px 1px; }
.btabs button { padding: 0 3px; }
.btabs .on, .docs button { background: #fff; }

.viewer { flex: 1; min-width: 0; display: flex; flex-direction: column; }
.canvas { flex: 1; position: relative; overflow: hidden; background: linear-gradient(#0078cd 0, #0078cc 49%, #2482c5 59%, #5c96c0 74%, #8aa2b2 87%, #aab0b5 98%); }
.vtools { display: flex; align-items: center; gap: 3px; height: 14px; margin: 4px 0 0 235px; }
.vtools button { width: 12px; height: 12px; background: #cce0f3; }
.vtools .long { width: 16px; }
.vtools .long svg { width: 16px; }
.vtools svg { width: 12px; height: 12px; }
.vtools .shade { background: #f2df4b; }
.vtools .half { background: #dbdf99; }
.vtools .sep { margin: 0 -1px; background: #77b4e4; }
.model { position: absolute; left: 305px; top: 74px; width: 225px; height: 315px; }
.math { font: 700 8px "DejaVu Sans Mono", monospace; fill: #c9f5c8; }
.axes { position: absolute; left: 20px; bottom: 12px; width: 32px; height: 36px; }
.axes text { font: 700 8px "Liberation Sans", sans-serif; }
.axes .az { fill: #2727ab; }
.axes .ay { fill: #5bc56c; font-weight: 400; }
.axes .ax { fill: #c31f2c; }
.docs { padding-left: 0; }
.docs button { padding: 0 3px; font: 600 7px/9px "Open Sans", "Noto Sans CJK SC", sans-serif; }

.command { height: 14px; display: flex; background: #f7f8f9; }
.command input { flex: 1; margin: 0 0 1px 279px; border: 1px solid #777; border-width: 1px 0 1px 2px; background: #f2f2f2; font: inherit; }
.status { height: 13px; padding: 2px; background: linear-gradient(#dfe2e6, #c5cad1); border-top: 1px solid #a9adb3; }

.meter { position: absolute; right: 217px; bottom: 16px; width: 67px; height: 34px; display: flex; align-items: center; }
.rates { flex: 1; height: 24px; margin-left: 17px; padding: 2px 6px 0 0; display: flex; flex-direction: column; gap: 3px; align-items: flex-end; background: #30343e; color: #eee; border-radius: 0 12px 12px 0; font: 700 5px/9px "Open Sans", sans-serif; }
.dial { position: absolute; left: 0; top: 0; width: 33px; height: 33px; border: 2px solid #30343e; border-bottom-color: #9fa55c; border-radius: 50%; background: #464b56; color: #cfd3d9; font: 13px/28px "Open Sans", sans-serif; text-align: center; }
.dial small { font-size: 6px; }
.mark { position: absolute; right: 36px; bottom: 29px; display: flex; align-items: center; gap: 5px; color: #fff; font: 400 27px/38px "Noto Sans CJK SC", sans-serif; text-shadow: 1px 1px 1px #555; white-space: nowrap; }
.mark svg { width: 44px; height: 40px; }

.ime { position: absolute; right: 0; bottom: 0; width: 128px; height: 35px; }
.pet { position: absolute; left: 0; bottom: 0; width: 29px; height: 29px; }
.badge { position: absolute; left: 29px; top: 9px; width: 24px; height: 10px; }
.tip { position: absolute; z-index: 2; right: 3px; top: 1px; width: 73px; height: 16px; padding: 0 3px 0 6px; display: flex; align-items: center; justify-content: space-between; background: #fff; border: 1px solid #d2d6db; color: #333; }
.tip svg { width: 8px; height: 8px; }
.imebar { position: absolute; left: 14px; right: 0; bottom: 0; height: 15px; padding: 0 2px 0 16px; display: flex; align-items: center; justify-content: space-around; background: #fff; color: #1b6fdb; font-weight: 700; }
.imebar svg { width: 9px; height: 9px; }
```
